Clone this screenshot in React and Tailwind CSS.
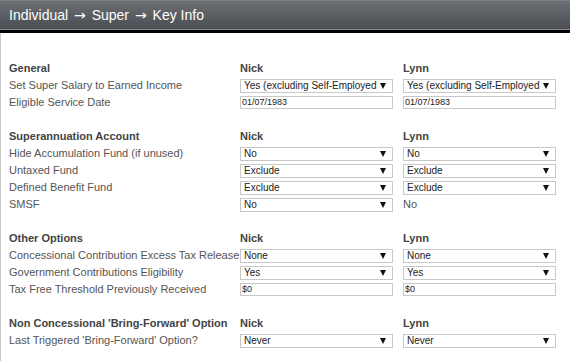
function Arrow() {
  return (
    <svg width="6" height="6" viewBox="0 0 6 6" className="shrink-0">
      <path d="M0 0H6L3 6Z" fill="#111" />
    </svg>
  )
}

function Select({ value }) {
  return (
    <div className="w-[153px] h-[14px] border border-[#c8c8c8] bg-white flex items-center pl-[3px] pr-[6px] text-[10px] leading-none text-[#222]">
      <span className="flex-1 overflow-hidden whitespace-nowrap mr-[3px]">{value}</span>
      <Arrow />
    </div>
  )
}

function Input({ value }) {
  return (
    <div className="w-[153px] h-[13px] border border-[#c8c8c8] bg-white flex items-center pl-[1px] text-[9px] leading-none text-[#222]">
      {value}
    </div>
  )
}

function Cell({ c }) {
  if (c.type === 'select') return <Select value={c.value} />
  if (c.type === 'input') return <Input value={c.value} />
  return <div className="w-[153px] text-[11px] text-[#555]">{c.value}</div>
}

const sections = [
  {
    title: 'General',
    rows: [
      { label: 'Set Super Salary to Earned Income', cells: [{ type: 'select', value: 'Yes (excluding Self-Employed)' }, { type: 'select', value: 'Yes (excluding Self-Employed)' }] },
      { label: 'Eligible Service Date', cells: [{ type: 'input', value: '01/07/1983' }, { type: 'input', value: '01/07/1983' }] },
    ],
  },
  {
    title: 'Superannuation Account',
    rows: [
      { label: 'Hide Accumulation Fund (if unused)', cells: [{ type: 'select', value: 'No' }, { type: 'select', value: 'No' }] },
      { label: 'Untaxed Fund', cells: [{ type: 'select', value: 'Exclude' }, { type: 'select', value: 'Exclude' }] },
      { label: 'Defined Benefit Fund', cells: [{ type: 'select', value: 'Exclude' }, { type: 'select', value: 'Exclude' }] },
      { label: 'SMSF', cells: [{ type: 'select', value: 'No' }, { type: 'text', value: 'No' }] },
    ],
  },
  {
    title: 'Other Options',
    rows: [
      { label: 'Concessional Contribution Excess Tax Release', cells: [{ type: 'select', value: 'None' }, { type: 'select', value: 'None' }] },
      { label: 'Government Contributions Eligibility', cells: [{ type: 'select', value: 'Yes' }, { type: 'select', value: 'Yes' }] },
      { label: 'Tax Free Threshold Previously Received', cells: [{ type: 'input', value: '$0' }, { type: 'input', value: '$0' }] },
    ],
  },
  {
    title: "Non Concessional 'Bring-Forward' Option",
    rows: [
      { label: "Last Triggered 'Bring-Forward' Option?", cells: [{ type: 'select', value: 'Never' }, { type: 'select', value: 'Never' }] },
    ],
  },
]

export default function App() {
  const arrow = <span className="font-['DejaVu_Sans',sans-serif] text-[14px] mx-[2px]">→</span>
  return (
    <div className="w-[570px] h-[361px] overflow-hidden bg-white font-['Liberation_Sans',Arial,sans-serif]">
      {/* Title bar */}
      <div className="h-[29px] bg-gradient-to-b from-[#6c6f74] to-[#4a4d52] border-t border-[#7d8085] flex items-center pl-[9px] text-white text-[14px] whitespace-pre">
        Individual {arrow} Super {arrow} Key Info
      </div>
      <div className="h-px bg-[#8a8c8f]" />
      <div className="h-[3px] bg-black" />

      {/* Body */}
      <div className="border-l border-[#c8c8c8] h-[328px] pt-[27px] pl-[8px]">
        {sections.map((s, i) => (
          <div key={i} className="mb-[17px]">
            <div className="flex items-center h-[17px] text-[11px] font-bold text-[#444]">
              <div className="w-[231px]">{s.title}</div>
              <div className="w-[153px]">Nick</div>
              <div className="w-[153px] ml-[10px]">Lynn</div>
            </div>
            {s.rows.map((r, j) => (
              <div key={j} className="flex items-center h-[17px] text-[11px] text-[#555]">
                <div className="w-[231px] whitespace-nowrap">{r.label}</div>
                <Cell c={r.cells[0]} />
                <div className="ml-[10px]">
                  <Cell c={r.cells[1]} />
                </div>
              </div>
            ))}
          </div>
        ))}
      </div>
    </div>
  )
}
